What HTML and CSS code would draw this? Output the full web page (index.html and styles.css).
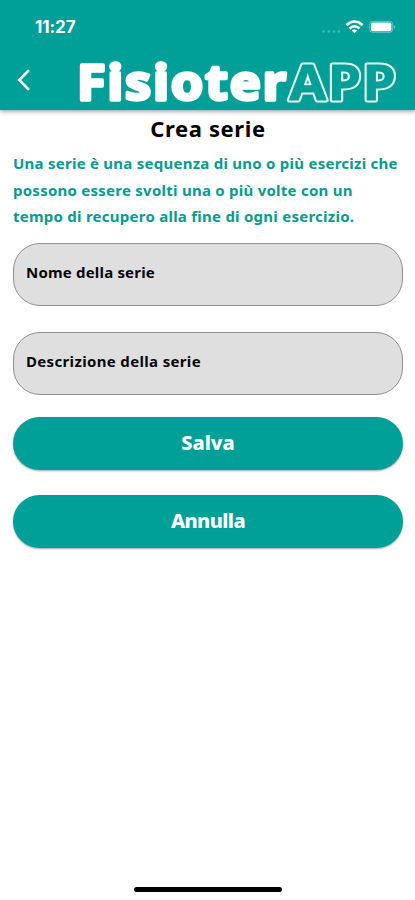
FILE: index.html
```html
<!DOCTYPE html>
<html lang="it">
<head>
<meta charset="utf-8">
<meta name="viewport" content="width=device-width, initial-scale=1">
<title>Crea serie</title>
<link rel="stylesheet" href="styles.css">
</head>
<body>
<div class="screen">
  <header class="header">
    <div class="status">
      <span class="time">11:27</span>
      <svg class="indicators" width="76" height="16" viewBox="0 0 76 16" aria-hidden="true">
        <g fill="#fff" opacity=".28"><circle cx="2.5" cy="11.5" r="1.2"/><circle cx="7.8" cy="11.5" r="1.2"/><circle cx="13" cy="11.5" r="1.2"/><circle cx="18" cy="11.5" r="1.2"/></g>
        <g fill="none" stroke="#fff" stroke-width="2.6"><path d="M25.4 5.3Q33.5-2.3 41.6 5.3"/><path d="M28.5 8.5Q33.5 4 38.5 8.5"/></g>
        <path d="M30.8 10.5Q33.5 8.3 36.2 10.5L33.5 13.3Z" fill="#fff"/>
        <rect x="48.7" y="1.3" width="23" height="11" rx="3" fill="none" stroke="#fff" stroke-opacity=".4"/>
        <rect x="50" y="2.6" width="20.4" height="8.6" rx="1.8" fill="#fff"/>
        <path d="M73.2 5Q75.3 6.8 73.2 9Z" fill="#fff" opacity=".5"/>
      </svg>
    </div>
    <div class="bar">
      <svg class="back" width="14" height="22" viewBox="0 0 14 22" aria-label="Indietro"><path d="M12 1.2L2.2 11L12 20.8" fill="none" stroke="#fff" stroke-width="2.6"/></svg>
      <svg class="logo" width="322" height="52" viewBox="0 0 322 52">
        <defs><text id="app" x="210.5" y="42" textLength="108" lengthAdjust="spacingAndGlyphs">APP</text></defs>
        <text class="logo-solid" x="-2" y="42" textLength="211" lengthAdjust="spacingAndGlyphs">Fisioter</text>
        <use class="logo-rim" href="#app"/>
        <use class="logo-core" href="#app"/>
      </svg>
    </div>
  </header>
  <main class="content">
    <h1 class="title">Crea serie</h1>
    <p class="intro"><span>Una serie è una sequenza di uno o più esercizi che</span> <span>possono essere svolti una o più volte con un</span> <span>tempo di recupero alla fine di ogni esercizio.</span></p>
    <div class="field"><span class="name">Nome della serie</span></div>
    <div class="field"><span class="desc">Descrizione della serie</span></div>
    <button class="button save">Salva</button>
    <button class="button cancel">Annulla</button>
  </main>
  <div class="home"></div>
</div>
</body>
</html>
```
FILE: styles.css
```css
* { box-sizing: border-box; }
body { margin: 0; background: #fff; font-family: "Noto Sans", sans-serif; }
.screen { display: flex; flex-direction: column; height: 900px; overflow: hidden; }
.header { height: 110px; flex: none; background: #00a099; box-shadow: 0 1px 5px rgba(0,0,0,.45); }
.status { display: flex; justify-content: space-between; height: 53px; padding: 17px 18px 0 35px; color: #fff; }
.time { font: 700 17px/20px Inter, sans-serif; letter-spacing: -.1px; }
.indicators { margin-top: 3px; }
.bar { display: flex; height: 57px; padding-left: 17px; }
.back { margin-top: 16px; flex: none; }
.logo { margin-left: 48px; margin-top: 5px; flex: none; overflow: visible; }
.logo text { font-family: "Noto Sans", sans-serif; font-weight: 700; font-size: 48.5px; stroke-linejoin: round; letter-spacing: 1.8px; }
.logo-solid { fill: #fff; stroke: #fff; stroke-width: 3.4px; }
.logo-rim { fill: #e6f6f5; stroke: #e6f6f5; stroke-width: 4.8px; }
.logo-core { fill: #00a099; stroke: #00a099; stroke-width: 1px; }
.content { flex: 1; padding: 4px 12px 0 13px; }
.title { margin: 0; text-align: center; font-size: 22px; line-height: 28px; font-weight: 700; letter-spacing: .6px; }
.intro { margin: 8px 0 13px; color: #079a91; font-size: 15px; line-height: 26.7px; font-weight: 700; letter-spacing: .25px; }
.intro span { display: block; white-space: nowrap; }
.field { display: flex; align-items: center; height: 63px; margin-bottom: 26px; padding: 0 12px 5px; border: 1px solid #929292; border-radius: 27px; background: #dfdfdf; font-size: 15px; font-weight: 700; color: #080808; }
.name { letter-spacing: .19px; }
.desc { letter-spacing: .34px; }
.button { display: block; width: 100%; height: 53px; margin: 0 0 25px; padding: 0 0 2px; border: 0; border-radius: 27px; background: #00a099; color: #fff; font: 800 20px/24px "Noto Sans", sans-serif; box-shadow: 0 1px 2px rgba(0,0,0,.35); }
.save { margin-top: -4px; }
.cancel { letter-spacing: -.6px; }
.home { align-self: center; width: 148px; height: 5px; margin-bottom: 8px; border-radius: 3px; background: #000; }
```
